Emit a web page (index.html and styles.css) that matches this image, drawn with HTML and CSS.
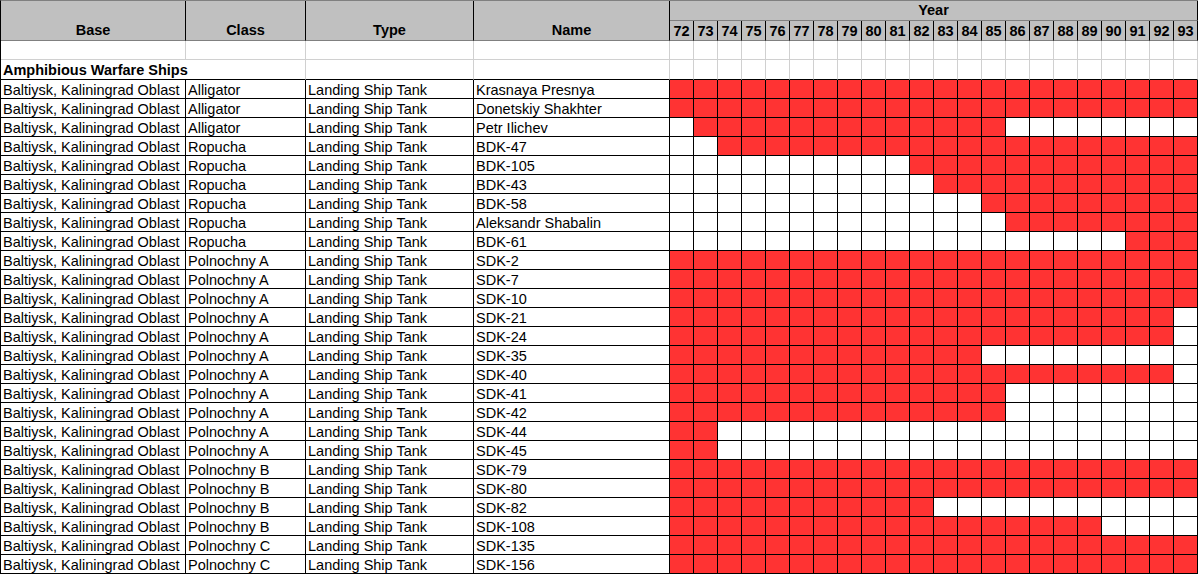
FILE: index.html
```html
<!DOCTYPE html>
<html lang="en">

<head>
    <meta charset="UTF-8">
    <meta name="viewport" content="width=device-width, initial-scale=1.0">
    <title>Amphibious Warfare Ships - Baltiysk</title>
    <link rel="stylesheet" href="styles.css">
</head>

<body>
    <div class="sheet" id="sheet">
        <div class="head tall">Base</div>
        <div class="head tall">Class</div>
        <div class="head tall">Type</div>
        <div class="head tall">Name</div>
        <div class="head year-title">Year</div>
    </div>

    <script>
        const FIRST_YEAR = 72;
        const LAST_YEAR = 93;
        const BASE = 'Baltiysk, Kaliningrad Oblast';
        const TYPE = 'Landing Ship Tank';

        // class, name, first year in service, last year in service
        const ships = [
            ['Alligator', 'Krasnaya Presnya', 72, 93],
            ['Alligator', 'Donetskiy Shakhter', 72, 93],
            ['Alligator', 'Petr Ilichev', 73, 85],
            ['Ropucha', 'BDK-47', 74, 93],
            ['Ropucha', 'BDK-105', 82, 93],
            ['Ropucha', 'BDK-43', 83, 93],
            ['Ropucha', 'BDK-58', 85, 93],
            ['Ropucha', 'Aleksandr Shabalin', 86, 93],
            ['Ropucha', 'BDK-61', 91, 93],
            ['Polnochny A', 'SDK-2', 72, 93],
            ['Polnochny A', 'SDK-7', 72, 93],
            ['Polnochny A', 'SDK-10', 72, 93],
            ['Polnochny A', 'SDK-21', 72, 92],
            ['Polnochny A', 'SDK-24', 72, 92],
            ['Polnochny A', 'SDK-35', 72, 84],
            ['Polnochny A', 'SDK-40', 72, 92],
            ['Polnochny A', 'SDK-41', 72, 85],
            ['Polnochny A', 'SDK-42', 72, 85],
            ['Polnochny A', 'SDK-44', 72, 73],
            ['Polnochny A', 'SDK-45', 72, 73],
            ['Polnochny B', 'SDK-79', 72, 93],
            ['Polnochny B', 'SDK-80', 72, 93],
            ['Polnochny B', 'SDK-82', 72, 82],
            ['Polnochny B', 'SDK-108', 72, 89],
            ['Polnochny C', 'SDK-135', 72, 93],
            ['Polnochny C', 'SDK-156', 72, 93]
        ];

        const sheet = document.getElementById('sheet');

        function cell(text, className) {
            const div = document.createElement('div');
            div.className = className;
            div.textContent = text;
            sheet.appendChild(div);
        }

        for (let y = FIRST_YEAR; y <= LAST_YEAR; y++) {
            cell(y, 'head year');
        }

        // empty row, then the section title row
        for (let i = 0; i < 26; i++) {
            cell('', 'blank');
        }
        cell('Amphibious Warfare Ships', 'blank edge section');
        for (let i = 0; i < 24; i++) {
            cell('', 'blank edge');
        }

        ships.forEach(([shipClass, name, from, to]) => {
            cell(BASE, 'data');
            cell(shipClass, 'data');
            cell(TYPE, 'data');
            cell(name, 'data');
            for (let y = FIRST_YEAR; y <= LAST_YEAR; y++) {
                cell('', y >= from && y <= to ? 'yr on' : 'yr');
            }
        });
    </script>
</body>

</html>
```

FILE: styles.css
```css
body {
    margin: 0;
    background-color: #fff;
    font-family: "Liberation Sans", Arial, sans-serif;
    font-size: 14.5px;
    color: #000;
}

.sheet {
    display: grid;
    grid-template-columns: 185px 120px 168px 196px repeat(22, 24px);
    grid-template-rows: 20px 20px 19px 20px repeat(26, 19px);
    width: max-content;
    border-left: 1px solid #000;
    border-top: 1px solid #808080;
}

.sheet > div {
    box-sizing: border-box;
    border-right: 1px solid #000;
    border-bottom: 1px solid #000;
    line-height: 18px;
    white-space: nowrap;
}

.head {
    background-color: #c0c0c0;
    font-weight: bold;
    text-align: center;
    border-bottom-color: #808080 !important;
}

.tall {
    grid-row: span 2;
    display: flex;
    align-items: flex-end;
    justify-content: center;
    padding-bottom: 1px;
}

.year-title {
    grid-column: span 22;
}

.year {
    padding-top: 1px;
}

.blank {
    border-right-color: #d0d0d0 !important;
    border-bottom-color: #d0d0d0 !important;
}

.blank.edge {
    border-bottom-color: #000 !important;
}

.section {
    grid-column: span 2;
    font-weight: bold;
    padding: 1px 0 0 2px;
}

.data {
    padding: 1px 0 0 2px;
}

.yr.on {
    background-color: #ff3333;
}
```
